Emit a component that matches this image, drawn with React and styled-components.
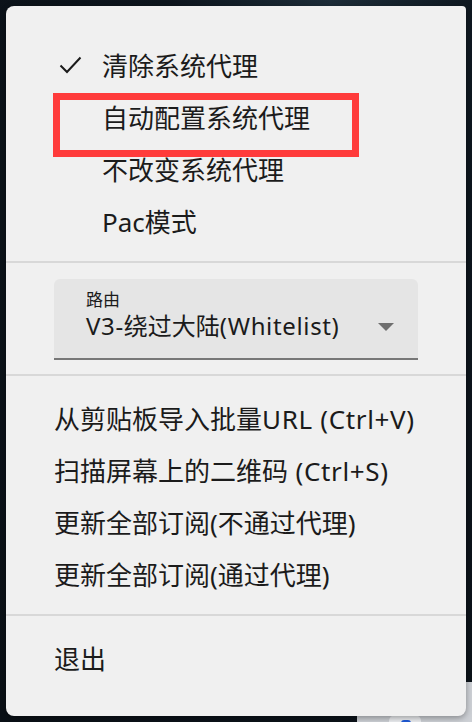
import styled, { createGlobalStyle } from 'styled-components';

const GlobalStyle = createGlobalStyle`
  html, body {
    margin: 0;
    padding: 0;
  }
  body {
    background: #0b1118;
    font-family: 'Noto Sans', 'Noto Sans CJK SC', sans-serif;
  }
`;

const Desktop = styled.div`
  position: relative;
  width: 472px;
  height: 722px;
  overflow: hidden;
  padding: 6px;
  box-sizing: border-box;
  background: radial-gradient(ellipse at 70% 0%, #1c2c38 0%, #0d151d 35%, #0a1016 100%);
`;

const TaskbarPeek = styled.div`
  position: absolute;
  left: 357px;
  top: 682px;
  right: 0;
  bottom: 0;
  background: #cdd0d5;
  .pill {
    position: absolute;
    left: 32px;
    top: 33px;
    width: 32px;
    height: 12px;
    border-radius: 6px 6px 0 0;
    background: #eceef1;
  }
  .dot {
    position: absolute;
    left: 44px;
    top: 38px;
    width: 10px;
    height: 6px;
    border-radius: 3px 3px 0 0;
    background: #1f5bd8;
  }
`;

const Panel = styled.div`
  position: relative;
  z-index: 1;
  width: 460px;
  box-sizing: border-box;
  padding: 33px 0 32px;
  background: #f0f0f0;
  border-radius: 8px 4px 8px 8px;
  box-shadow: 0 2px 6px rgba(0, 0, 0, 0.35);
  color: #1b1b1b;
`;

const ItemList = styled.ul`
  list-style: none;
  margin: 0;
  padding: 0 0 0 48px;
`;

const Item = styled.li`
  position: relative;
  display: flex;
  align-items: center;
  height: 52px;
  font-size: 26px;
  white-space: nowrap;
  &::after {
    content: '';
    display: ${(p) => (p.$highlighted ? 'block' : 'none')};
    position: absolute;
    left: -1px;
    top: 2px;
    width: 306px;
    height: 64px;
    box-sizing: border-box;
    border: 7px solid #ff3b3b;
  }
`;

// latin runs are a touch wider in the original UI font
const Latin = styled.span`
  letter-spacing: 0.65px;
`;

const CheckSlot = styled.span`
  display: flex;
  align-items: center;
  width: 48px;
  flex: none;
  padding-left: 5px;
  box-sizing: border-box;
`;

const Divider = styled.hr`
  margin: 14px 0 16px;
  border: 0;
  height: 2px;
  background: #d8d8d8;
`;

const SelectBox = styled.div`
  position: relative;
  margin: 0 48px;
  width: 364px;
  height: 81px;
  box-sizing: border-box;
  padding: 10px 0 0 32px;
  background: #e5e5e5;
  border-radius: 6px 6px 0 0;
  border-bottom: 2px solid #777777;
`;

const SelectLabel = styled.div`
  height: 22px;
  font-size: 17px;
  line-height: 22px;
  color: #1b1b1b;
`;

const SelectValue = styled.div`
  height: 30px;
  font-size: 24px;
  line-height: 30px;
  color: #1b1b1b;
  white-space: nowrap;
`;

const Caret = styled.span`
  position: absolute;
  right: 24px;
  top: 44px;
  width: 0;
  height: 0;
  border-left: 8px solid transparent;
  border-right: 8px solid transparent;
  border-top: 8px solid #6f6f6f;
`;

const CheckIcon = () => (
  <svg width='23' height='18' viewBox='0 0 23 18'>
    <polyline
      points='1.5,9.5 8,16 21.5,1.5'
      fill='none'
      stroke='#1b1b1b'
      strokeWidth='2'
    />
  </svg>
);

const withLatin = (text) =>
  text
    .split(/([A-Za-z0-9()+\-. ]+)/)
    .filter(Boolean)
    .map((part, i) =>
      /[A-Za-z0-9]/.test(part) ? <Latin key={i}>{part}</Latin> : part
    );

const proxyModes = [
  { label: '清除系统代理', checked: true },
  { label: '自动配置系统代理', highlighted: true },
  { label: '不改变系统代理' },
  { label: 'Pac模式' },
];

const actions = [
  '从剪贴板导入批量URL (Ctrl+V)',
  '扫描屏幕上的二维码 (Ctrl+S)',
  '更新全部订阅(不通过代理)',
  '更新全部订阅(通过代理)',
];

const App = () => {
  return (
    <>
      <GlobalStyle />
      <Desktop>
        <Panel>
          <ItemList>
            {proxyModes.map((mode) => (
              <Item key={mode.label} $highlighted={mode.highlighted}>
                <CheckSlot>{mode.checked && <CheckIcon />}</CheckSlot>
                <span>{mode.label}</span>
              </Item>
            ))}
          </ItemList>
          <Divider />
          <SelectBox>
            <SelectLabel>路由</SelectLabel>
            <SelectValue>{withLatin('V3-绕过大陆(Whitelist)')}</SelectValue>
            <Caret />
          </SelectBox>
          <Divider />
          <ItemList>
            {actions.map((action) => (
              <Item key={action}>
                <span>{withLatin(action)}</span>
              </Item>
            ))}
          </ItemList>
          <Divider />
          <ItemList>
            <Item>退出</Item>
          </ItemList>
        </Panel>
        <TaskbarPeek>
          <span className='pill' />
          <span className='dot' />
        </TaskbarPeek>
      </Desktop>
    </>
  );
};

export default App;
